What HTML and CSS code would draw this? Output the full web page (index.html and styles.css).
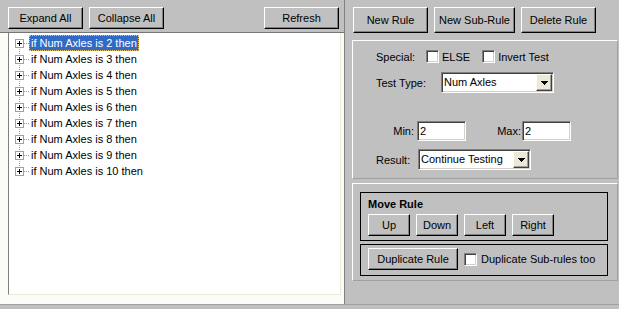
FILE: index.html
```html
<!doctype html>
<html>
    <head>
        <meta charset="utf-8">
        <title>Rule Editor</title>
        <link rel="stylesheet" href="styles.css">
    </head>
    <body>
        <div class="app">

            <div class="pane-left">
                <div class="toolbar">
                    <button type="button" class="btn btn-tool">Expand All</button>
                    <button type="button" class="btn btn-tool">Collapse All</button>
                    <button type="button" class="btn btn-tool btn-push">Refresh</button>
                </div>

                <div class="tree-wrap">
                    <div class="tree">
                        <ul class="tree-list">
                            <li><span class="expander"></span><span class="node selected">if Num Axles is 2 then</span></li>
                            <li><span class="expander"></span><span class="node">if Num Axles is 3 then</span></li>
                            <li><span class="expander"></span><span class="node">if Num Axles is 4 then</span></li>
                            <li><span class="expander"></span><span class="node">if Num Axles is 5 then</span></li>
                            <li><span class="expander"></span><span class="node">if Num Axles is 6 then</span></li>
                            <li><span class="expander"></span><span class="node">if Num Axles is 7 then</span></li>
                            <li><span class="expander"></span><span class="node">if Num Axles is 8 then</span></li>
                            <li><span class="expander"></span><span class="node">if Num Axles is 9 then</span></li>
                            <li><span class="expander"></span><span class="node">if Num Axles is 10 then</span></li>
                        </ul>
                    </div>
                </div>
            </div>

            <div class="pane-right">
                <div class="actions">
                    <button type="button" class="btn btn-action">New Rule</button>
                    <button type="button" class="btn btn-action btn-sub">New Sub-Rule</button>
                    <button type="button" class="btn btn-action">Delete Rule</button>
                </div>

                <div class="frame frame-rule">
                    <div class="field field-special">
                        <span class="lbl lbl-special">Special:</span>
                        <input type="checkbox" class="check" id="else">
                        <label for="else" class="check-text">ELSE</label>
                        <input type="checkbox" class="check check-invert" id="invert">
                        <label for="invert" class="check-text">Invert Test</label>
                    </div>

                    <div class="field field-type">
                        <span class="lbl lbl-type">Test Type:</span>
                        <div class="combo">
                            <span class="combo-text">Num Axles</span>
                            <span class="combo-btn"><svg width="7" height="4" viewBox="0 0 7 4" shape-rendering="crispEdges"><path d="M0 0h7v1h-1v1h-1v1h-1v1h-1v-1h-1v-1h-1v-1h-1z" fill="#000"/></svg></span>
                        </div>
                    </div>

                    <div class="field field-range">
                        <label for="min" class="lbl lbl-min">Min:</label>
                        <input type="text" class="text" id="min" value="2">
                        <label for="max" class="lbl lbl-max">Max:</label>
                        <input type="text" class="text" id="max" value="2">
                    </div>

                    <div class="field field-result">
                        <span class="lbl lbl-result">Result:</span>
                        <div class="combo">
                            <span class="combo-text">Continue Testing</span>
                            <span class="combo-btn"><svg width="7" height="4" viewBox="0 0 7 4" shape-rendering="crispEdges"><path d="M0 0h7v1h-1v1h-1v1h-1v1h-1v-1h-1v-1h-1v-1h-1z" fill="#000"/></svg></span>
                        </div>
                    </div>
                </div>

                <div class="frame frame-move">
                    <div class="box box-move">
                        <div class="box-title">Move Rule</div>
                        <div class="move-buttons">
                            <button type="button" class="btn btn-move">Up</button>
                            <button type="button" class="btn btn-move">Down</button>
                            <button type="button" class="btn btn-move">Left</button>
                            <button type="button" class="btn btn-move">Right</button>
                        </div>
                    </div>

                    <div class="box box-dup">
                        <button type="button" class="btn btn-dup">Duplicate Rule</button>
                        <input type="checkbox" class="check check-dup" id="dup-sub">
                        <label for="dup-sub" class="check-text check-text-dup">Duplicate Sub-rules too</label>
                    </div>
                </div>
            </div>

        </div>
    </body>
</html>
```

FILE: styles.css
```css
html,
body {
    margin: 0;
    padding: 0;
}

body {
    width: 619px;
    height: 309px;
    overflow: hidden;
    background: #c0c0c0;
    color: #000;
    font: 11px "Liberation Sans", Arial, sans-serif;
}

.app {
    display: flex;
    height: 304px;
    border-bottom: 1px solid #a0a0a0;
}

/* Buttons */

.btn {
    box-sizing: border-box;
    height: 22px;
    margin: 0;
    padding: 0;
    background: #c0c0c0;
    color: #000;
    font: inherit;
    border: 1px solid;
    border-color: #fff #000 #000 #fff;
    box-shadow: inset -1px -1px #808080;
}

.btn-tool {
    width: 75px;
}

.btn-push {
    margin-left: auto;
}

.btn-action {
    width: 75px;
    height: 26px;
}

.btn-sub {
    width: 81px;
}

.btn-move {
    width: 42px;
}

.btn-dup {
    width: 90px;
}

/* Left pane */

.pane-left {
    width: 344px;
    display: flex;
    flex-direction: column;
    border-right: 1px solid #808080;
}

.toolbar {
    box-sizing: border-box;
    height: 32px;
    padding: 7px 5px 0 8px;
    display: flex;
    gap: 6px;
}

.tree-wrap {
    flex: 1;
    display: flex;
    border-top: 1px solid #767676;
    background: #fbfbf8;
    padding: 0 3px 9px 8px;
}

.tree {
    flex: 1;
    background: #fff;
    border-left: 1px solid #808080;
    border-right: 1px solid #ece9d8;
    border-bottom: 1px solid #ece9d8;
    padding-top: 2px;
}

.tree-list {
    margin: 0;
    padding: 0;
    list-style: none;
    background: repeating-linear-gradient(to bottom, #a0a0a0 0 1px, transparent 1px 2px) no-repeat 10px 8px / 1px calc(100% - 16px);
}

.tree-list li {
    height: 16px;
    display: flex;
    align-items: center;
    padding-left: 6px;
    background: repeating-linear-gradient(to right, #a0a0a0 0 1px, transparent 1px 2px) no-repeat 15px 8px / 5px 1px;
}

.expander {
    box-sizing: border-box;
    width: 9px;
    height: 9px;
    border: 1px solid #a0a0a0;
    background:
        linear-gradient(#000, #000) center / 5px 1px no-repeat,
        linear-gradient(#000, #000) center / 1px 5px no-repeat,
        #fff;
}

.node {
    margin-left: 5px;
    padding: 0 1px;
    line-height: 14px;
    border: 1px solid transparent;
    white-space: nowrap;
}

.node.selected {
    background: #316ac5;
    color: #fff;
    border: 1px dotted #f2c46a;
}

/* Right pane */

.pane-right {
    flex: 1;
    padding: 7px 1px 0 7px;
}

.actions {
    display: flex;
    gap: 6px;
    margin-left: 1px;
}

.frame {
    box-sizing: border-box;
    border: 1px solid;
    border-color: #fff #a0a0a0 #a0a0a0 #fff;
}

.frame-rule {
    height: 139px;
    margin-top: 7px;
}

.frame-move {
    height: 98px;
    margin-top: 4px;
    padding-top: 8px;
}

.field {
    display: flex;
    align-items: center;
    padding-left: 23px;
}

.field-special {
    height: 13px;
    margin-top: 9px;
}

.field-type {
    margin-top: 9px;
}

.field-range {
    margin-top: 28px;
}

.field-result {
    margin-top: 8px;
}

.lbl-special {
    width: 50px;
}

.lbl-type {
    width: 65px;
}

.lbl-min {
    width: 38px;
    padding-right: 3px;
    text-align: right;
}

.lbl-max {
    width: 55px;
    padding-right: 1px;
    text-align: right;
}

.lbl-result {
    width: 42px;
}

.check {
    -webkit-appearance: none;
    appearance: none;
    box-sizing: border-box;
    width: 13px;
    height: 13px;
    margin: 0;
    background: #fff;
    border: 1px solid;
    border-color: #808080 #fff #fff #808080;
    box-shadow: inset 1px 1px #404040, inset -1px -1px #d4d0c8;
}

.check-text {
    margin-left: 3px;
}

.check-invert {
    margin-left: 12px;
}

.text {
    box-sizing: border-box;
    width: 49px;
    height: 20px;
    margin: 0;
    padding: 0 2px;
    background: #fff;
    color: #000;
    font: inherit;
    border: 1px solid;
    border-color: #808080 #fff #fff #808080;
    box-shadow: inset 1px 1px #404040, inset -1px -1px #d4d0c8;
    outline: none;
}

.combo {
    box-sizing: border-box;
    width: 113px;
    height: 21px;
    padding: 1px;
    display: flex;
    background: #fff;
    border: 1px solid;
    border-color: #808080 #fff #fff #808080;
    box-shadow: inset 1px 1px #404040, inset -1px -1px #d4d0c8;
}

.combo-text {
    flex: 1;
    padding-left: 1px;
    line-height: 17px;
    white-space: nowrap;
}

.combo-btn {
    box-sizing: border-box;
    width: 16px;
    height: 17px;
    display: flex;
    align-items: center;
    justify-content: center;
    background: #ece9d8;
    border: 1px solid;
    border-color: #fff #404040 #404040 #fff;
    box-shadow: inset -1px -1px #a0a0a0;
}

.box {
    box-sizing: border-box;
    width: 248px;
    margin-left: 7px;
    border: 1px solid #000;
}

.box-move {
    padding: 4px 0 4px 7px;
}

.box-title {
    font-weight: bold;
    line-height: 14px;
}

.move-buttons {
    display: flex;
    gap: 6px;
    margin-top: 3px;
}

.box-dup {
    margin-top: 3px;
    padding: 3px 0 5px 7px;
    display: flex;
    align-items: center;
}

.check-dup {
    margin-left: 6px;
}

.check-text-dup {
    margin-left: 4px;
}
```
